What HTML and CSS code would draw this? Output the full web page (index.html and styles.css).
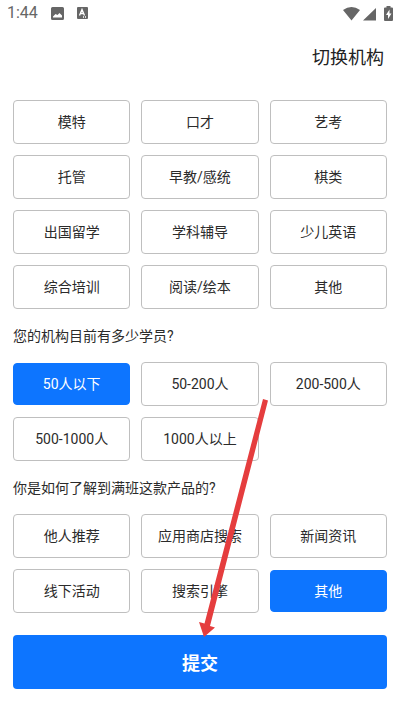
FILE: index.html
```html
<!DOCTYPE html>
<html lang="zh-CN">
<head>
	<meta charset="utf-8">
	<meta name="viewport" content="width=device-width, initial-scale=1">
	<title>机构信息</title>
	<link rel="stylesheet" href="styles.css">
</head>
<body>
	<div class="statusbar">
		<span class="time">1:44</span>
		<svg class="pic" width="13" height="13" viewBox="0 0 13 13"><path fill="#666" fill-rule="evenodd" d="M1.500 0h10a1.500 1.500 0 0 1 1.500 1.500v10a1.500 1.500 0 0 1-1.500 1.500h-10a1.500 1.500 0 0 1-1.500-1.500v-10a1.500 1.500 0 0 1 1.500-1.500zM2 10.500h9V8.500L8.500 6 6.500 8 4.500 7 2 9.500z"/></svg>
		<svg class="lang" width="11" height="12" viewBox="0 0 11 12"><rect width="11" height="12" rx="1" fill="#666"/><path fill="none" stroke="#fff" stroke-width="1.300" d="M2.500 8.500L5 2.500l2.500 6M3.500 6.500h3M6 10h1M8 10h1"/></svg>
		<svg class="signal" width="50" height="15" viewBox="0 0 50 15"><path fill="#666" d="M0 4Q8.500-2 17 4L8.500 14.500zM33 2v12.500H20zM43.500 1.500V0h4v1.500H49q1 0 1 1V14q0 1-1 1h-7q-1 0-1-1V2.500q0-1 1-1z"/><path fill="#fff" d="M46.500 3.500L43 9h2v4l3.500-5.500h-2z"/></svg>
	</div>
	<div class="topbar"><a class="switch" href="#">切换机构</a></div>
	<form class="main">
		<div class="options" role="radiogroup" aria-label="机构类型">
			<label class="option"><input type="radio" name="type">模特</label>
			<label class="option"><input type="radio" name="type">口才</label>
			<label class="option"><input type="radio" name="type">艺考</label>
			<label class="option"><input type="radio" name="type">托管</label>
			<label class="option"><input type="radio" name="type">早教/感统</label>
			<label class="option"><input type="radio" name="type">棋类</label>
			<label class="option"><input type="radio" name="type">出国留学</label>
			<label class="option"><input type="radio" name="type">学科辅导</label>
			<label class="option"><input type="radio" name="type">少儿英语</label>
			<label class="option"><input type="radio" name="type">综合培训</label>
			<label class="option"><input type="radio" name="type">阅读/绘本</label>
			<label class="option"><input type="radio" name="type">其他</label>
		</div>
		<p class="question" id="q_size">您的机构目前有多少学员?</p>
		<div class="options" role="radiogroup" aria-labelledby="q_size">
			<label class="option"><input type="radio" name="size" checked>50人以下</label>
			<label class="option"><input type="radio" name="size">50-200人</label>
			<label class="option"><input type="radio" name="size">200-500人</label>
			<label class="option"><input type="radio" name="size">500-1000人</label>
			<label class="option"><input type="radio" name="size">1000人以上</label>
		</div>
		<p class="question" id="q_from">你是如何了解到满班这款产品的?</p>
		<div class="options" role="radiogroup" aria-labelledby="q_from">
			<label class="option"><input type="radio" name="from">他人推荐</label>
			<label class="option"><input type="radio" name="from">应用商店搜索</label>
			<label class="option"><input type="radio" name="from">新闻资讯</label>
			<label class="option"><input type="radio" name="from">线下活动</label>
			<label class="option"><input type="radio" name="from">搜索引擎</label>
			<label class="option"><input type="radio" name="from" checked>其他</label>
		</div>
		<div class="submit_row">
			<button class="submit" type="button">提交</button>
			<!-- arrow pointing at the submit button -->
			<svg class="arrow" width="70" height="238" viewBox="0 0 70 238"><path fill="#e53d3e" d="M64 0l5 1.500L11 227l5 1.500L5 238 0 223l5.500 1.500z"/></svg>
		</div>
	</form>
</body>
</html>
```
FILE: styles.css
```css
* {box-sizing: border-box;}
body{
	margin: 0;
	background-color: #fff;
	color: #2b2b2b;
	font-family: Roboto, "Noto Sans CJK SC", sans-serif;
	font-size: 14px;
	line-height: 20px;
}
.statusbar{
	display: flex;
	align-items: center;
	height: 26px;
	padding: 0 7px;
	color: #666;
}
.time{font-size: 16px;}
.pic{margin-left: 13px;}
.lang{margin-left: 13px;}
.signal{margin-left: auto;}

.topbar{
	display: flex;
	justify-content: flex-end;
	align-items: center;
	height: 64px;
	padding: 0 16px;
}
.switch{
	color: #222;
	font-size: 18px;
	text-decoration: none;
}
.main{padding: 10px 13px 22px;}
.options{
	display: grid;
	grid-template-columns: repeat(3, 1fr);
	gap: 11px;
}
.option{
	display: flex;
	justify-content: center;
	align-items: center;
	height: 44px;
	border: 1px solid #bfbfbf;
	border-radius: 4px;
	cursor: pointer;
}
.option input{
	appearance: none;
	width: 0;
	height: 0;
	margin: 0;
}
.option:has(input:checked){
	height: 42px;
	margin: 1px 0;
	border-color: #0d75ff;
	background-color: #0d75ff;
	color: #fff;
}
.question{margin: 17px 0 16px;}

.submit_row{
	position: relative;
	margin-top: 22px;
}
.submit{
	display: block;
	width: 100%;
	height: 54px;
	border: none;
	border-radius: 4px;
	background-color: #0d75ff;
	color: #fff;
	font-family: inherit;
	font-size: 18px;
	font-weight: 700;
}
.arrow{
	position: absolute;
	left: 50%;
	bottom: 52px;
	margin-left: -1px;
	pointer-events: none;
}
```
